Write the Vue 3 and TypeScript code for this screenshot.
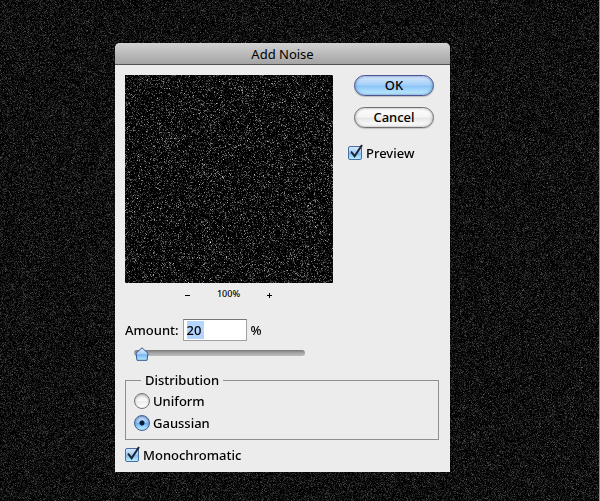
<script setup lang="ts">
import { onBeforeUnmount, onMounted, ref } from 'vue'

type Distribution = 'uniform' | 'gaussian'

const amount = ref<string>('20')
const preview = ref<boolean>(true)
const monochromatic = ref<boolean>(true)
const distribution = ref<Distribution>('gaussian')
const options: { value: Distribution; label: string }[] = [
  { value: 'uniform', label: 'Uniform' },
  { value: 'gaussian', label: 'Gaussian' },
]

const backdrop = ref<HTMLCanvasElement | null>(null)
const sample = ref<HTMLCanvasElement | null>(null)

function seeded(seed: number): () => number {
  let s = seed
  return () => {
    s = (s + 0x6d2b79f5) | 0
    let t = Math.imul(s ^ (s >>> 15), 1 | s)
    t = (t + Math.imul(t ^ (t >>> 7), 61 | t)) ^ t
    return ((t ^ (t >>> 14)) >>> 0) / 4294967296
  }
}

// Monochrome gaussian noise over a black canvas.
function paint(canvas: HTMLCanvasElement | null, sigma: number, base: number, seed: number): void {
  if (!canvas) return
  const w = canvas.clientWidth
  const h = canvas.clientHeight
  canvas.width = w
  canvas.height = h
  const ctx = canvas.getContext('2d')
  if (!ctx || !w || !h) return
  const random = seeded(seed)
  const image = ctx.createImageData(w, h)
  for (let i = 0; i < image.data.length; i += 4) {
    const g = Math.sqrt(-2 * Math.log(1 - random())) * Math.cos(2 * Math.PI * random())
    const v = Math.max(0, base + g * sigma)
    image.data[i] = v
    image.data[i + 1] = v
    image.data[i + 2] = v
    image.data[i + 3] = 255
  }
  ctx.putImageData(image, 0, 0)
}

function paintAll(): void {
  paint(backdrop.value, 23, 13, 7)
  paint(sample.value, 60, -8, 21)
}

onMounted(() => {
  paintAll()
  window.addEventListener('resize', paintAll)
})
onBeforeUnmount(() => window.removeEventListener('resize', paintAll))
</script>

<template>
  <main class="screen">
    <canvas ref="backdrop" class="backdrop" aria-hidden="true"></canvas>
    <form class="dialog" role="dialog" aria-labelledby="dialog-title" @submit.prevent>
      <h1 id="dialog-title" class="title">Add Noise</h1>
      <div class="body">
        <div class="top">
          <div class="preview">
            <canvas ref="sample" class="sample" aria-hidden="true"></canvas>
            <div class="zoom">
              <button type="button" class="step">
                <svg width="7" height="7" viewBox="0 0 7 7"><path d="M1 3.5h5" stroke="#000" /></svg>
              </button>
              <output class="level">100%</output>
              <button type="button" class="step">
                <svg width="7" height="7" viewBox="0 0 7 7"><path d="M1 3.5h5M3.5 1v5" stroke="#000" /></svg>
              </button>
            </div>
          </div>
          <div class="actions">
            <button type="submit" class="pill primary">OK</button>
            <button type="button" class="pill">Cancel</button>
            <label class="choice">
              <span class="box">
                <input v-model="preview" type="checkbox" />
                <svg class="tick" width="17" height="17" viewBox="0 0 17 17"><path d="M3 7.5 6.6 12.2 14 1" /></svg>
              </span>
              Preview
            </label>
          </div>
        </div>

        <div class="amount">
          <label for="amount">Amount:</label>
          <span class="field">
            <input id="amount" v-model="amount" type="text" size="2" />
          </span>
          <span>%</span>
        </div>
        <input v-model="amount" class="slider" type="range" min="20" max="400" aria-label="Amount" />

        <fieldset class="group">
          <legend>Distribution</legend>
          <label v-for="o in options" :key="o.value" class="choice">
            <input v-model="distribution" class="radio" type="radio" name="distribution" :value="o.value" />
            {{ o.label }}
          </label>
        </fieldset>

        <label class="choice">
          <span class="box">
            <input v-model="monochromatic" type="checkbox" />
            <svg class="tick" width="17" height="17" viewBox="0 0 17 17"><path d="M3 7.5 6.6 12.2 14 1" /></svg>
          </span>
          Monochromatic
        </label>
      </div>
    </form>
  </main>
</template>

<style>
body {
  background: #0d0d0d;
}
</style>

<style scoped>
.screen {
  position: relative;
  box-sizing: border-box;
  min-height: 100vh;
  padding: 43px 114px 29px 115px;
  border-right: 1px solid #8c8c8c;
  display: flex;
  align-items: flex-start;
  font-family: "Noto Sans", "Open Sans", sans-serif;
  font-size: 13px;
  font-weight: 500;
  line-height: 18px;
  color: #000;
}
.backdrop {
  position: absolute;
  inset: 0;
  width: 100%;
  height: 100%;
}
.dialog {
  position: relative;
  flex: 0 1 335px;
  border-radius: 5px 5px 0 0;
  background: #ececec;
  overflow: hidden;
}
.title {
  margin: 0;
  padding: 2px 0 1px;
  border-bottom: 1px solid #515151;
  background: linear-gradient(#d2d2d2, #a4a4a4);
  font-size: 13px;
  font-weight: 400;
  text-align: center;
}
.body {
  padding: 10px 11px 7px 10px;
  display: flex;
  flex-direction: column;
}
.top {
  display: flex;
  justify-content: space-between;
}
.preview {
  flex: 0 0 208px;
}
.sample {
  display: block;
  width: 100%;
  aspect-ratio: 1;
  background: #000;
}
.zoom {
  display: flex;
  justify-content: center;
  align-items: center;
  gap: 26px;
  height: 22px;
  padding-right: 1px;
}
.step {
  display: flex;
  padding: 3px 0 0;
  border: 0;
  background: none;
}
.level {
  font-size: 9px;
  line-height: 12px;
}
.actions {
  display: flex;
  flex-direction: column;
  align-items: flex-start;
  width: 91px;
}
.pill {
  width: 80px;
  height: 21px;
  margin: 0 0 11px 6px;
  padding: 0 0 1px;
  border: 1px solid #6f6f6f;
  border-radius: 11px;
  background: linear-gradient(#ffffff, #f4f4f4 48%, #e6e6e6 52%, #ffffff);
  box-shadow: inset 0 0 3px #9a9a9a, 0 1px 1px #c4c4c4;
  font: inherit;
  color: #000;
}
.primary {
  border-color: #4c5390;
  background: linear-gradient(#d9e9fb, #a5cff8 46%, #8cc4f8 54%, #c3f0ff);
  box-shadow: inset 0 0 3px #5578b4, 0 1px 1px #b9bcc4;
}
.actions .choice {
  margin-top: 4px;
}
.choice {
  display: flex;
  align-items: center;
  gap: 3px;
  line-height: 20px;
}
.box {
  display: grid;
  width: 15px;
  height: 15px;
}
.box input,
.radio {
  appearance: none;
  box-sizing: border-box;
  margin: 0;
}
.box input {
  grid-area: 1 / 1;
  width: 14px;
  height: 14px;
  border: 1px solid #7d7d7d;
  border-radius: 2px;
  background: linear-gradient(#fff, #e8e8e8);
}
.box input:checked {
  border-color: #4a6fa8;
  background: linear-gradient(#d5e7fa, #a0cbf5 50%, #84bdf3 54%, #b8ecff);
}
.tick {
  grid-area: 1 / 1;
  margin-top: -2px;
  visibility: hidden;
  pointer-events: none;
  fill: none;
  stroke: #1c2530;
  stroke-width: 2;
}
.box input:checked + .tick {
  visibility: visible;
}
.amount {
  display: flex;
  align-items: center;
  gap: 4px;
  margin-top: 14px;
}
.field {
  box-sizing: border-box;
  width: 64px;
  height: 22px;
  padding: 1px 3px;
  border: 1px solid #a0a0a0;
  border-top-color: #777;
  background: #fff;
}
.field input {
  display: block;
  width: 17px;
  height: 18px;
  padding: 0;
  border: 0;
  background: #b4d5fe;
  font: inherit;
  color: #000;
}
.slider {
  appearance: none;
  width: 171px;
  height: 16px;
  margin: 4px 0 0 9px;
  background: none;
}
.slider::-webkit-slider-runnable-track {
  height: 6px;
  border-radius: 3px;
  background: linear-gradient(#777, #a6a6a6 50%, #bcbcbc);
}
.slider::-webkit-slider-thumb {
  appearance: none;
  width: 15px;
  height: 15px;
  margin-top: -3px;
  background: url("data:image/svg+xml,%3Csvg xmlns='http://www.w3.org/2000/svg' viewBox='0 0 15 15'%3E%3ClinearGradient id='g' x2='0' y2='1'%3E%3Cstop stop-color='%23e4f0fd'/%3E%3Cstop offset='.5' stop-color='%23a8cff8'/%3E%3Cstop offset='.55' stop-color='%2375b3f3'/%3E%3Cstop offset='1' stop-color='%23bdf0ff'/%3E%3C/linearGradient%3E%3Cpath d='M8 .8 14 6.2 13 13.3H3L2 6.2Z' fill='url(%23g)' stroke='%23345591' stroke-linejoin='round'/%3E%3C/svg%3E") no-repeat;
}
.group {
  min-width: 0;
  margin: 10px 0 5px;
  padding: 2px 8px 6px;
  border: 1px solid #8f8f8f;
}
.group legend {
  margin-left: 7px;
  padding: 0 4px;
}
.group .choice + .choice {
  margin-top: 2px;
}
.radio {
  width: 16px;
  height: 16px;
  border: 1px solid #747474;
  border-radius: 50%;
  background: linear-gradient(#e4e4e4, #fafafa 48%, #ececec 52%, #fff);
  box-shadow: inset 0 1px 2px #aaa;
}
.radio:checked {
  border-color: #3d5c91;
  background: radial-gradient(circle at 50% 50%, #0b1a33 0 2px, transparent 3px),
    linear-gradient(#d5e7fa, #92c3f4 48%, #6db0f1 52%, #bdf2ff);
  box-shadow: inset 0 1px 2px #5578b4;
}
</style>
